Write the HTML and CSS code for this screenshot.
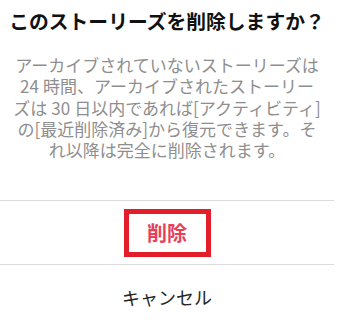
FILE: index.html
```html
<!DOCTYPE html>
<html lang="ja">
<head>
<meta charset="utf-8">
<link rel="stylesheet" href="styles.css">
</head>
<body>
<div class="dialog">
  <div class="title">このストーリーズを削除しますか？</div>
  <div class="message">アーカイブされていないストーリーズは<br><span class="num-r">24</span>時間、アーカイブされたストーリー<br>ズは<span class="num">30</span>日以内であれば[アクティビティ]<br>の[最近削除済み]から復元できます。そ<br>れ以降は完全に削除されます。</div>
  <div class="row row-delete"><span class="highlight"><span class="delete">削除</span></span></div>
  <div class="row row-cancel"><span class="cancel">キャンセル</span></div>
</div>
</body>
</html>
```
FILE: styles.css
```css
html, body {
  margin: 0;
  padding: 0;
  background: #ffffff;
}
body {
  font-family: "Noto Sans CJK JP", "Noto Sans", sans-serif;
  overflow: hidden;
}
.dialog {
  width: 334px;
  text-align: center;
}
.title {
  padding-top: 7px;
  font-size: 19.8px;
  line-height: 28px;
  font-weight: bold;
  color: #111111;
  white-space: nowrap;
}
.message {
  margin-top: 19px;
  padding-bottom: 40px;
  font-size: 17px;
  line-height: 21.3px;
  color: #8e8e8e;
  white-space: nowrap;
}
.num-r {
  margin-right: 4px;
}
.num {
  margin: 0 4px;
}
.row {
  border-top: 1px solid #dbdbdb;
  height: 63px;
  display: flex;
  align-items: center;
  justify-content: center;
}
.highlight {
  box-sizing: border-box;
  width: 87px;
  height: 48px;
  border: 5px solid #e31e2a;
  display: flex;
  align-items: center;
  justify-content: center;
}
.delete {
  font-size: 20px;
  font-weight: bold;
  color: #e8405a;
}
.cancel {
  font-size: 18px;
  color: #262626;
}
```
